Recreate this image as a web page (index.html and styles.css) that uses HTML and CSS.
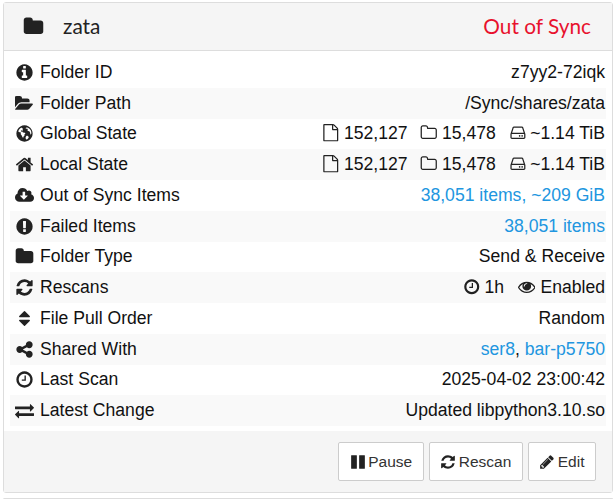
FILE: index.html
```html
<!DOCTYPE html>
<html lang="en">
<head>
	<meta charset="UTF-8">
	<title>zata</title>
	<link rel="stylesheet" href="styles.css">
</head>
<body>
	<svg class="defs" width="0" height="0">
		<symbol id="i-folder" viewBox="0 0 1792 1792"><path d="M1728 608v704q0 92-66 158t-158 66h-1216q-92 0-158-66t-66-158v-960q0-92 66-158t158-66h320q92 0 158 66t66 158v32h672q92 0 158 66t66 158z"/></symbol>
		<symbol id="i-info" viewBox="0 0 1792 1792"><path d="M1152 1376v-160q0-14-9-23t-23-9h-96v-512q0-14-9-23t-23-9h-320q-14 0-23 9t-9 23v160q0 14 9 23t23 9h96v320h-96q-14 0-23 9t-9 23v160q0 14 9 23t23 9h448q14 0 23-9t9-23zm-128-896v-160q0-14-9-23t-23-9h-192q-14 0-23 9t-9 23v160q0 14 9 23t23 9h192q14 0 23-9t9-23zm640 416q0 209-103 385.5t-279.5 279.5-385.5 103-385.5-103-279.5-279.5-103-385.5 103-385.5 279.5-279.5 385.5-103 385.5 103 279.5 279.5 103 385.5z"/></symbol>
		<symbol id="i-open" viewBox="0 0 1920 1792"><path d="M1815 952q0 31-31 66l-336 396q-43 51-120.5 86.5t-143.5 35.5h-1088q-34 0-60.5-13t-26.5-43q0-31 31-66l336-396q43-51 120.5-86.5t143.5-35.5h1088q34 0 60.5 13t26.5 43zm-343-344v160h-832q-94 0-197 47.5t-164 119.5l-337 396-5 6q0-4-.5-12.5t-.5-12.5v-960q0-92 66-158t158-66h320q92 0 158 66t66 158v32h544q92 0 158 66t66 158z"/></symbol>
		<symbol id="i-globe" viewBox="0 0 1792 1792"><path fill-rule="evenodd" d="M896 128q209 0 385.500 103t279.500 279.500 103 385.500-103 385.500-279.500 279.500-385.500 103-385.500-103-279.500-279.500-103-385.500 103-385.500 279.500-279.500 385.500-103zM640 336q-150 60-250 190-60 80-85 170l120 90 90 -10 50 80 -40 90 110 130 70 170 70 60 30 -130 100 -90 -20 -100 100 -100 -60 -60 -170 -30 -70 -90 -90 20 -50 -60 50 -70 90 30 80 -60 -60 -80 60 -50 -110 -40zM1090 320l-90 60 40 70 110 -20 60 80 -40 70 60 80 120 20 70 110 40 220 80 -100q30 -170 -70 -340 -110 -180 -300 -240zM1130 1090l-100 90 -40 130 70 150 100 -20 130 -150 -20 -110z"/></symbol>
		<symbol id="i-home" viewBox="0 0 1792 1792"><path d="M1472 992v480q0 26-19 45t-45 19h-384v-384h-256v384h-384q-26 0-45-19t-19-45v-480q0-1 .5-3t.5-3l575-474 575 474q1 2 1 6zm223-69l-62 74q-8 9-21 11h-3q-13 0-21-7l-692-577-692 577q-12 8-24 7-13-2-21-11l-62-74q-8-10-7-23.500t11-21.500l719-599q32-26 76-26t76 26l244 204v-195q0-14 9-23t23-9h192q14 0 23 9t9 23v408l219 182q10 8 11 21.500t-7 23.500z"/></symbol>
		<symbol id="i-cloud" viewBox="0 0 1920 1792"><path d="M1280 928q0-14-9-23t-23-9h-224v-352q0-13-9.500-22.500t-22.500-9.500h-192q-13 0-22.500 9.500t-9.500 22.500v352h-224q-14 0-23 9t-9 23q0 12 10 24l352 352q9 9 23 9t23-9l351-351q11-13 11-25zm640 224q0 159-112.500 271.500t-271.500 112.500h-1088q-185 0-316.500-131.500t-131.500-316.500q0-130 70-240t188-165q-2-30-2-43 0-212 150-362t362-150q156 0 285.500 87t188.500 231q71-62 166-62 106 0 181 75t75 181q0 76-41 138 130 31 213.500 135.500t83.500 238.500z"/></symbol>
		<symbol id="i-alert" viewBox="0 0 1792 1792"><path d="M896 128q209 0 385.500 103t279.500 279.500 103 385.500-103 385.500-279.500 279.500-385.500 103-385.500-103-279.500-279.500-103-385.500 103-385.500 279.500-279.500 385.500-103zm128 1247v-190q0-14-9-23.500t-22-9.500h-192q-13 0-23 10t-10 23v190q0 13 10 23t23 10h192q13 0 22-9.500t9-23.500zm-2-344l18-621q0-12-10-18-10-8-24-8h-220q-14 0-24 8-10 6-10 18l17 621q0 10 10 17.500t24 7.500h185q14 0 23.500-7.500t11.500-17.500z"/></symbol>
		<symbol id="i-refresh" viewBox="0 0 1792 1792"><path d="M1639 1056q0 5-1 7-64 268-268 434.500t-478 166.500q-146 0-282.500-55t-243.500-157l-129 129q-19 19-45 19t-45-19-19-45v-448q0-26 19-45t45-19h448q26 0 45 19t19 45-19 45l-137 137q71 66 161 102t187 36q134 0 250-65t186-179q11-17 53-117 8-23 30-23h192q13 0 22.500 9.500t9.500 22.500zm25-800v448q0 26-19 45t-45 19h-448q-26 0-45-19t-19-45 19-45l138-138q-148-137-349-137-134 0-250 65t-186 179q-11 17-53 117-8 23-30 23h-199q-13 0-22.500-9.500t-9.500-22.500v-7q65-268 270-434.500t480-166.500q146 0 284 55.500t245 156.500l130-129q19-19 45-19t45 19 19 45z"/></symbol>
		<symbol id="i-sort" viewBox="0 0 1792 1792"><path d="M1408 1088q0 26-19 45l-448 448q-19 19-45 19t-45-19l-448-448q-19-19-19-45t19-45 45-19h896q26 0 45 19t19 45zm0-384q0 26-19 45t-45 19h-896q-26 0-45-19t-19-45 19-45l448-448q19-19 45-19t45 19l448 448q19 19 19 45z"/></symbol>
		<symbol id="i-share" viewBox="0 0 1792 1792"><path d="M1344 1024q133 0 226.500 93.500t93.500 226.500-93.500 226.500-226.500 93.500-226.500-93.500-93.500-226.500q0-12 2-34l-360-180q-92 86-218 86-133 0-226.500-93.500t-93.500-226.500 93.500-226.500 226.500-93.500q126 0 218 86l360-180q-2-22-2-34 0-133 93.500-226.500t226.500-93.500 226.500 93.500 93.500 226.500-93.500 226.500-226.500 93.500q-126 0-218-86l-360 180q2 22 2 34t-2 34l360 180q92-86 218-86z"/></symbol>
		<symbol id="i-clock" viewBox="0 0 1792 1792"><path d="M1024 544v448q0 14-9 23t-23 9h-320q-14 0-23-9t-9-23v-64q0-14 9-23t23-9h224v-352q0-14 9-23t23-9h64q14 0 23 9t9 23zm416 352q0-148-73-273t-198-198-273-73-273 73-198 198-73 273 73 273 198 198 273 73 273-73 198-198 73-273zm224 0q0 209-103 385.500t-279.500 279.500-385.500 103-385.500-103-279.500-279.500-103-385.500 103-385.500 279.500-279.500 385.500-103 385.500 103 279.500 279.500 103 385.500z"/></symbol>
		<symbol id="i-exchange" viewBox="0 0 1792 1792"><path d="M1792 1184v192q0 13-9.500 22.500t-22.500 9.500h-1376v192q0 13-9.500 22.500t-22.500 9.500q-12 0-24-10l-319-320q-9-9-9-22 0-14 9-23l320-320q9-9 23-9 13 0 22.500 9.500t9.500 22.500v192h1376q13 0 22.500 9.500t9.500 22.500zm0-544q0 14-9 23l-320 320q-9 9-23 9-13 0-22.500-9.500t-9.500-22.500v-192h-1376q-13 0-22.500-9.500t-9.500-22.500v-192q0-13 9.500-22.500t22.500-9.500h1376v-192q0-14 9-23t23-9q12 0 24 10l319 319q9 9 9 23z"/></symbol>
		<symbol id="i-file" viewBox="0 0 1792 1792"><path d="M1596 380q28 28 48 76t20 88v1152q0 40-28 68t-68 28h-1344q-40 0-68-28t-28-68v-1600q0-40 28-68t68-28h896q40 0 88 20t76 48zm-444-244v376h376q-10-29-22-41l-313-313q-12-12-41-22zm384 1528v-1024h-416q-40 0-68-28t-28-68v-416h-768v1536h1280z"/></symbol>
		<symbol id="i-folder-o" viewBox="0 0 1792 1792"><path d="M1600 1312v-704q0-40-28-68t-68-28h-704q-40 0-68-28t-28-68v-64q0-40-28-68t-68-28h-320q-40 0-68 28t-28 68v960q0 40 28 68t68 28h1216q40 0 68-28t28-68zm128-704v704q0 92-66 158t-158 66h-1216q-92 0-158-66t-66-158v-960q0-92 66-158t158-66h320q92 0 158 66t66 158v32h672q92 0 158 66t66 158z"/></symbol>
		<symbol id="i-hdd" viewBox="0 0 1536 1792"><path d="M1040 1216q0 33-23.500 56.500t-56.500 23.500-56.500-23.500-23.500-56.500 23.500-56.500 56.500-23.500 56.500 23.500 23.500 56.500zm256 0q0 33-23.500 56.500t-56.500 23.500-56.500-23.500-23.500-56.500 23.500-56.500 56.500-23.500 56.500 23.500 23.500 56.500zm128 160v-320q0-13-9.500-22.500t-22.500-9.500h-1216q-13 0-22.500 9.500t-9.500 22.500v320q0 13 9.500 22.500t22.500 9.500h1216q13 0 22.500-9.500t9.500-22.500zm-1230-480h1180l-157-482q-4-13-16-21.500t-26-8.500h-782q-14 0-26 8.500t-16 21.500zm1358 160v320q0 66-47 113t-113 47h-1216q-66 0-113-47t-47-113v-320q0-25 16-75l197-606q17-53 63-86t101-33h782q55 0 101 33t63 86l197 606q16 50 16 75z"/></symbol>
		<symbol id="i-eye" viewBox="0 0 1792 1792"><path d="M1664 960q-152-236-381-353 61 104 61 225 0 185-131.500 316.500t-316.500 131.500-316.500-131.500-131.500-316.500q0-121 61-225-229 117-381 353 133 205 333.500 326.500t434.500 121.500 434.500-121.500 333.500-326.500zm-720-384q0-20-14-34t-34-14q-125 0-214.500 89.500t-89.500 214.500q0 20 14 34t34 14 34-14 14-34q0-86 61-147t147-61q20 0 34-14t14-34zm848 384q0 34-20 69-140 230-376.500 368.500t-499.500 138.500-499.500-139-376.500-368q-20-35-20-69t20-69q140-229 376.500-368t499.500-139 499.500 139 376.500 368q20 35 20 69z"/></symbol>
		<symbol id="i-pause" viewBox="0 0 1792 1792"><path d="M1664 192v1408q0 26-19 45t-45 19h-512q-26 0-45-19t-19-45v-1408q0-26 19-45t45-19h512q26 0 45 19t19 45zm-896 0v1408q0 26-19 45t-45 19h-512q-26 0-45-19t-19-45v-1408q0-26 19-45t45-19h512q26 0 45 19t19 45z"/></symbol>
		<symbol id="i-pencil" viewBox="0 0 1792 1792"><path d="M491 1536l91-91-235-235-91 91v107h128v128h107zm523-928q0-22-22-22-10 0-17 7l-542 542q-7 7-7 17 0 22 22 22 10 0 17-7l542-542q7-7 7-17zm-54-192l416 416-832 832h-416v-416zm683 96q0 53-37 90l-166 166-416-416 166-165q36-38 90-38 53 0 91 38l235 234q37 39 37 91z"/></symbol>
	</svg>

	<div class="panel">
		<div class="panel-heading">
			<svg class="folder-icon"><use href="#i-folder"/></svg>
			<span class="folder-name">zata</span>
			<span class="folder-status">Out of Sync</span>
		</div>
		<div class="panel-body">
			<div class="row">
				<span class="label"><svg class="ico"><use href="#i-info"/></svg>Folder ID</span>
				<span class="value">z7yy2-72iqk</span>
			</div>
			<div class="row">
				<span class="label"><svg class="ico"><use href="#i-open"/></svg>Folder Path</span>
				<span class="value">/Sync/shares/zata</span>
			</div>
			<div class="row">
				<span class="label"><svg class="ico"><use href="#i-globe"/></svg>Global State</span>
				<span class="value">
					<svg class="ico-in"><use href="#i-file"/></svg>152,127
					<svg class="ico-in gap"><use href="#i-folder-o"/></svg>15,478
					<svg class="ico-in gap"><use href="#i-hdd"/></svg>~1.14 TiB
				</span>
			</div>
			<div class="row">
				<span class="label"><svg class="ico"><use href="#i-home"/></svg>Local State</span>
				<span class="value">
					<svg class="ico-in"><use href="#i-file"/></svg>152,127
					<svg class="ico-in gap"><use href="#i-folder-o"/></svg>15,478
					<svg class="ico-in gap"><use href="#i-hdd"/></svg>~1.14 TiB
				</span>
			</div>
			<div class="row">
				<span class="label"><svg class="ico"><use href="#i-cloud"/></svg>Out of Sync Items</span>
				<span class="value"><a href="#">38,051 items, ~209 GiB</a></span>
			</div>
			<div class="row">
				<span class="label"><svg class="ico"><use href="#i-alert"/></svg>Failed Items</span>
				<span class="value"><a href="#">38,051 items</a></span>
			</div>
			<div class="row">
				<span class="label"><svg class="ico"><use href="#i-folder"/></svg>Folder Type</span>
				<span class="value">Send &amp; Receive</span>
			</div>
			<div class="row">
				<span class="label"><svg class="ico"><use href="#i-refresh"/></svg>Rescans</span>
				<span class="value">
					<svg class="ico-in"><use href="#i-clock"/></svg>1h
					<svg class="ico-in gap eye"><use href="#i-eye"/></svg>Enabled
				</span>
			</div>
			<div class="row">
				<span class="label"><svg class="ico"><use href="#i-sort"/></svg>File Pull Order</span>
				<span class="value">Random</span>
			</div>
			<div class="row">
				<span class="label"><svg class="ico"><use href="#i-share"/></svg>Shared With</span>
				<span class="value"><a href="#">ser8</a>, <a href="#">bar-p5750</a></span>
			</div>
			<div class="row">
				<span class="label"><svg class="ico"><use href="#i-clock"/></svg>Last Scan</span>
				<span class="value">2025-04-02 23:00:42</span>
			</div>
			<div class="row">
				<span class="label"><svg class="ico"><use href="#i-exchange"/></svg>Latest Change</span>
				<span class="value">Updated libpython3.10.so</span>
			</div>
		</div>
		<div class="panel-footer">
			<a class="btn" href="#"><svg class="ico-btn"><use href="#i-pause"/></svg>Pause</a>
			<a class="btn" href="#"><svg class="ico-btn"><use href="#i-refresh"/></svg>Rescan</a>
			<a class="btn" href="#"><svg class="ico-btn"><use href="#i-pencil"/></svg>Edit</a>
		</div>
	</div>
	<div class="panel next"></div>
</body>
</html>
```
FILE: styles.css
```css
html, body {
	height: 100%;
	overflow: hidden;
}
body {
	box-sizing: border-box;
	margin: 0;
	padding: 2px 3px 0;
	background: #fff;
	color: #111;
	font-family: "Liberation Sans", Arial, sans-serif;
	font-size: 17.6px;
}
a {
	color: #2196e0;
	text-decoration: none;
}
svg {
	fill: #222;
}
.defs {
	position: absolute;
}

.panel {
	border: 1px solid #ddd;
	border-radius: 3px;
	background: #fff;
}
.panel.next {
	height: 2px;
	margin-top: 5px;
	border-bottom: 0;
}

.panel-heading {
	display: flex;
	align-items: center;
	height: 47px;
	padding: 0 21px 0 19px;
	background: #f5f5f5;
	border-bottom: 1px solid #ddd;
	font-family: Lato, sans-serif;
	font-size: 20.8px;
}
.folder-icon {
	width: 21px;
	height: 21px;
	margin-right: 19px;
}
.folder-name {
	flex: 1;
	color: #222;
	padding-bottom: 3px;
}
.folder-status {
	color: #e8112d;
	padding-bottom: 3px;
}

.panel-body {
	padding: 6px 6px 5px;
}
.row {
	display: flex;
	justify-content: space-between;
	align-items: center;
	height: 30.75px;
	padding: 0 1px 0 5px;
}
.row:nth-child(even) {
	background: #f9f9f9;
}
.label {
	display: flex;
	align-items: center;
}
.ico {
	width: 19px;
	height: 19px;
	margin-right: 6px;
}
.ico-in {
	width: 17.5px;
	height: 17.5px;
	margin-right: 4px;
	vertical-align: -2.5px;
}
.ico-in.gap {
	margin-left: 8px;
}
.ico-in.eye {
	margin-left: 9px;
	margin-right: 5px;
}

.panel-footer {
	display: flex;
	justify-content: flex-end;
	gap: 5px;
	padding: 11px 16px;
	background: #f5f5f5;
}
.btn {
	display: flex;
	align-items: center;
	height: 37px;
	padding: 0 10.5px;
	background: #fff;
	border: 1px solid #ccc;
	border-radius: 2px;
	color: #333;
	font-size: 15.5px;
}
.ico-btn {
	width: 16px;
	height: 16px;
	margin-right: 2.5px;
}
```
